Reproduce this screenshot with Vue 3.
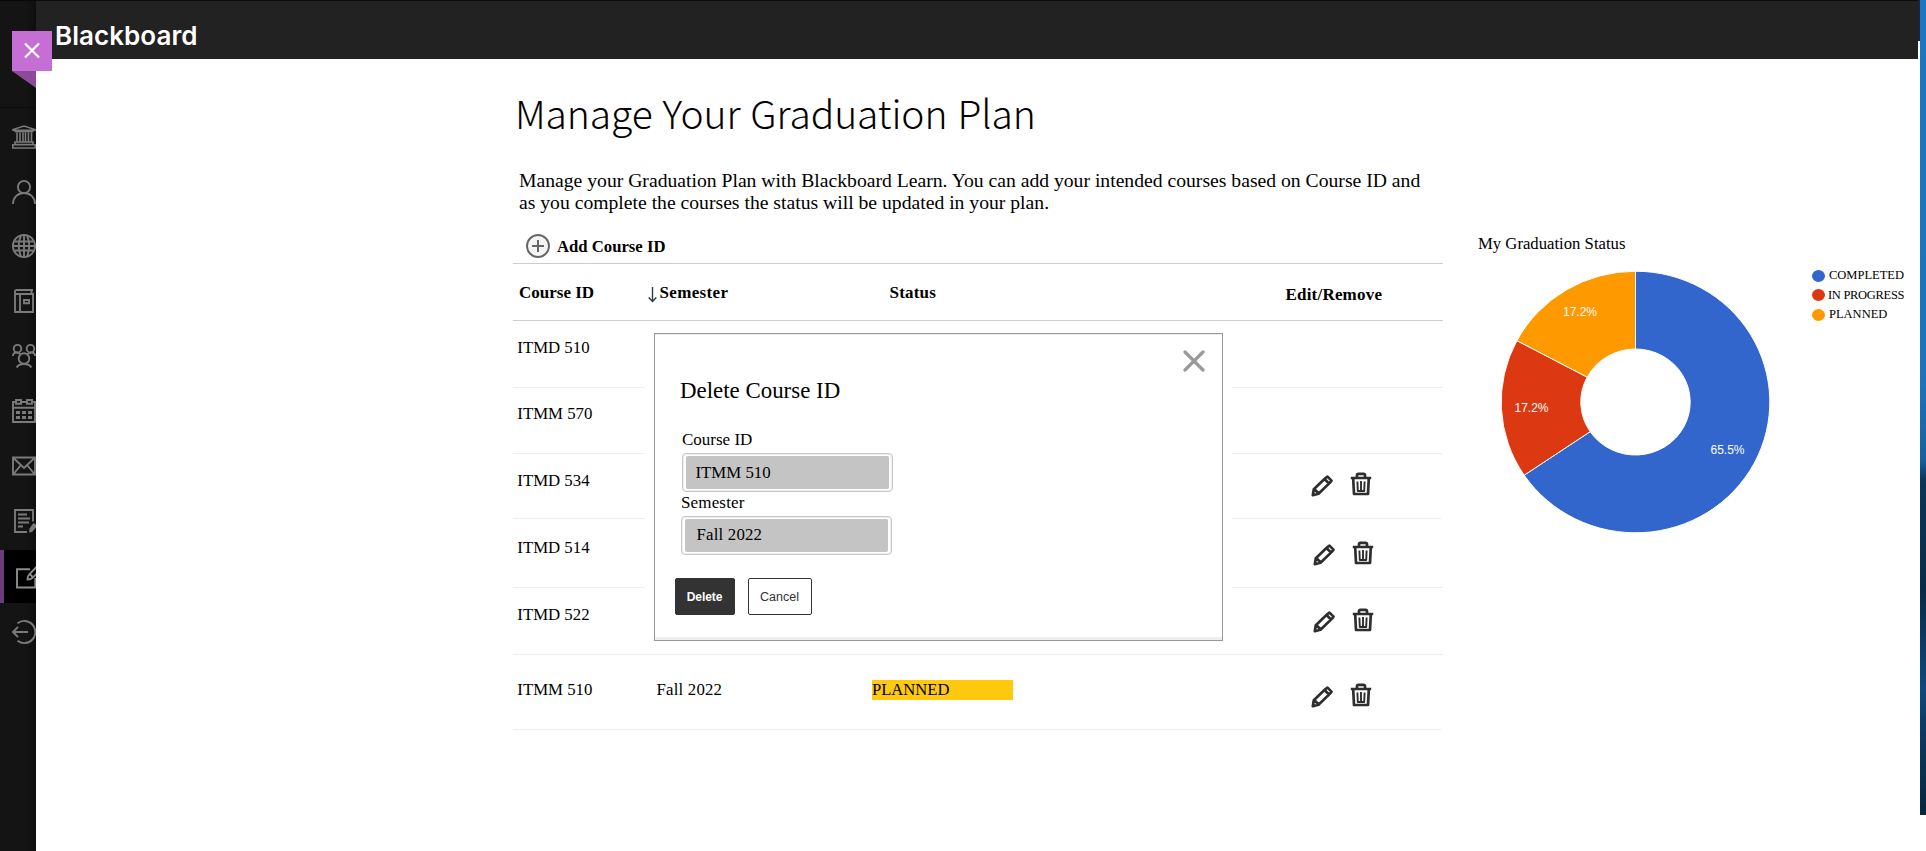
<script setup>
const navItems = [
  { name: 'institution', h: 57 },
  { name: 'profile', h: 54 },
  { name: 'activity', h: 54 },
  { name: 'courses', h: 55 },
  { name: 'organizations', h: 55 },
  { name: 'calendar', h: 55 },
  { name: 'messages', h: 55 },
  { name: 'grades', h: 56 },
  { name: 'tools', h: 53, active: true },
  { name: 'signout', h: 57 },
]

const rows = [
  { id: 'ITMD 510', h: 67, top: 17, w: 930 },
  { id: 'ITMM 570', h: 66, top: 16, w: 929 },
  { id: 'ITMD 534', h: 65, top: 17, w: 928, actions: 18, shift: 0 },
  { id: 'ITMD 514', h: 69, top: 19, w: 930, actions: 22, shift: 2 },
  { id: 'ITMD 522', h: 67, top: 17, w: 930, actions: 20, shift: 2 },
  { id: 'ITMM 510', h: 75, top: 25, w: 928, actions: 28, shift: 0, semester: 'Fall 2022', status: 'PLANNED' },
]

const legend = [
  { label: 'COMPLETED', color: '#3366cc' },
  { label: 'IN PROGRESS', color: '#dc3912', tight: true },
  { label: 'PLANNED', color: '#ff9900' },
]

const CX = 134.5, CY = 131, RX = 134.3, RY = 130.8, HX = 54.7, HY = 53
function slice(from, to) {
  const p = (f, rx, ry) => {
    const a = f * 2 * Math.PI
    return `${(CX + rx * Math.sin(a)).toFixed(2)} ${(CY - ry * Math.cos(a)).toFixed(2)}`
  }
  const large = to - from > 0.5 ? 1 : 0
  return `M${p(from, RX, RY)}A${RX} ${RY} 0 ${large} 1 ${p(to, RX, RY)}L${p(to, HX, HY)}A${HX} ${HY} 0 ${large} 0 ${p(from, HX, HY)}Z`
}
const slices = [
  { d: slice(0, 0.6555), color: '#3366cc', label: '65.5%', x: 226.5, y: 183 },
  { d: slice(0.6555, 0.8277), color: '#dc3912', label: '17.2%', x: 30.5, y: 140.5 },
  { d: slice(0.8277, 1), color: '#ff9900', label: '17.2%', x: 79, y: 45 },
]
</script>

<template>
  <div class="app">
    <aside class="sidebar">
      <div class="side-top"></div>
      <nav>
        <a v-for="n in navItems" :key="n.name" class="nav-item" :class="{ active: n.active }" :style="{ height: n.h + 'px' }">
          <svg class="nav-icon" width="24" height="24" viewBox="0 0 24 24" fill="none" stroke="#7a7a7a" stroke-width="1.9">
            <g v-if="n.name === 'institution'">
              <path d="M1 5.2V4.6L12 1l11 3.6v.6zM2.5 6.5h19M5 7.5v9M8 7.5v9M11 7.5v9M13.5 7.5v9M16.500 7.500v9M19.500 7.500v9M3 17h18v2.500H3zM.8 19.700h22.400v3.300H.8z" stroke-width="1.600" />
            </g>
            <g v-else-if="n.name === 'profile'">
              <circle cx="12" cy="7" r="6.100" />
              <path d="M.9 24C1.200 17 6 13 12 13s10.800 4 11.100 11" />
            </g>
            <g v-else-if="n.name === 'activity'">
              <circle cx="12" cy="12" r="11.100" />
              <path d="M12 1v22M1 12h22M3 7.500h18M3 16.500h18M9 1.500c-3 6-3 15 0 21M15 1.500c3 6 3 15 0 21" />
            </g>
            <g v-else-if="n.name === 'courses'">
              <path d="M21 1H4.500a1.500 1.500 0 0 0-1.500 1.500V23h18V5H3.500M19.500 1.500V4.500M8 5v18M12 11h5v3.300h-5z" />
            </g>
            <g v-else-if="n.name === 'organizations'">
              <circle cx="5.500" cy="4.700" r="3.800" />
              <circle cx="18.500" cy="4.700" r="3.800" />
              <circle cx="12" cy="14.500" r="5.300" />
              <path d="M.9 12c0-2 1.300-3.500 3.600-3.500 2 0 3.500 1 4.500 2.500M23.100 12c0-2-1.300-3.500-3.600-3.500-2 0-3.500 1-4.500 2.500M4.500 23.500c1.500-2.500 4-3.500 7.500-3.500s6 1 7.500 3.500" />
            </g>
            <g v-else-if="n.name === 'calendar'">
              <path d="M3 3H1v20h22V3h-2M1 8.700h22M9 3h6M4 1h5v3.700H4zM15 1h5v3.700h-5z" />
              <path d="M4 13.500h4M10 13.500h4M16 13.500h4M4 18.500h4M10 18.500h4M16 18.500h4" stroke-width="2.800" />
            </g>
            <g v-else-if="n.name === 'messages'">
              <path d="M1 3.500h22v17H1zM1.500 4l10.500 10L22.500 4M1.500 20l7.500-9M22.500 20L15 11" />
            </g>
            <g v-else-if="n.name === 'grades'">
              <path d="M21 12.500V1H3v22h12M6 5.500h9M6 9.500h12M6 13.500h11M6 17.500h5" />
              <path d="M17 23.500l.5-4 4-5.500 2.500 1.500v3l-4 4.500z" fill="#7a7a7a" stroke="none" />
            </g>
            <g v-else-if="n.name === 'tools'" stroke="#8c8c8c">
              <path d="M18 4.300H5v18.200h18.300V13" />
              <path d="M24.500 2l-7 7.200c-1.500 1.500-2 3.300-2 5.300 2 0 3.800-.5 5-1.700l6-6M17.500 9.500c1.500.3 2.700 1.500 3 3" />
            </g>
            <g v-else>
              <path d="M5.500 3.200A11.100 11.100 0 1 1 5.500 20.800M16 12H1.200M6 6.800L1 12l5 5.200" />
            </g>
          </svg>
        </a>
      </nav>
    </aside>

    <div class="main">
      <header class="topbar">
        <span class="logo">Blackboard</span>
      </header>

      <div class="content">
        <section class="plan">
          <h1>Manage Your Graduation Plan</h1>
          <p class="intro">
            <span>Manage your Graduation Plan with Blackboard Learn. You can add your intended courses based on Course ID and</span><br />
            <span>as you complete the courses the status will be updated in your plan.</span>
          </p>
          <div class="add-course">
            <svg width="24" height="24" viewBox="0 0 24 24" fill="none" stroke="#666">
              <circle cx="12" cy="12" r="11" fill="#f5f5f5" stroke-width="1.900" />
              <path d="M12 6v12M6 12h12" stroke-width="2" />
            </svg>
            <span>Add Course ID</span>
          </div>
          <div class="table-head">
            <span class="c1">Course ID</span>
            <svg width="9" height="16" viewBox="0 0 9 16" fill="none" stroke="#2d3b45" stroke-width="1.400">
              <path d="M4.500 0v14M.7 10.500l3.800 4 3.800-4" />
            </svg>
            <span class="c2">Semester</span>
            <span class="c3">Status</span>
            <span class="c4">Edit/Remove</span>
          </div>
          <div v-for="(r, i) in rows" :key="i" class="row" :style="{ height: r.h + 'px', width: r.w + 'px' }">
            <span class="course" :style="{ paddingTop: r.top + 'px' }">{{ r.id }}</span>
            <span class="semester">{{ r.semester }}</span>
            <span class="state"><span v-if="r.status" class="badge">{{ r.status }}</span></span>
            <span v-if="r.actions" class="actions" :style="{ paddingTop: r.actions + 'px', paddingLeft: r.shift + 'px' }">
              <svg class="pencil" width="22" height="22" viewBox="0 0 22 22" fill="none" stroke="#2e2e2e" stroke-width="2.700" stroke-linejoin="round">
                <path d="M1.800 20.200l1-6L14.500 3l2-1.400 4 4-1.500 2L7.500 18.800zM13.500 4l4.500 4.500M3.200 14l4.500 4.500" />
              </svg>
              <svg width="22" height="24" viewBox="0 0 22 24" fill="none" stroke="#2e2e2e" stroke-width="2.700" stroke-linejoin="round">
                <path d="M.8 6h20.400M7 5.500V3.200Q7 1.800 8.500 1.800h5Q15 1.800 15 3.200v2.300M3.200 6.500l.8 15.500h14l.8-15.500" />
                <path d="M7.400 9.500l.4 9.500h6.400l.4-9.500M11 9v10" stroke-width="1.900" />
              </svg>
            </span>
          </div>

          <div class="dialog">
            <svg class="close" width="22" height="22" viewBox="0 0 22 22" stroke="#999" stroke-width="3.200" stroke-linecap="round">
              <path d="M2 2l18 18M20 2L2 20" />
            </svg>
            <h2>Delete Course ID</h2>
            <label>Course ID</label>
            <div class="field"><div class="value">ITMM 510</div></div>
            <label class="second">Semester</label>
            <div class="field second"><div class="value">Fall 2022</div></div>
            <div class="buttons">
              <button class="delete">Delete</button>
              <button class="cancel">Cancel</button>
            </div>
          </div>
        </section>

        <section class="status-panel">
          <h3>My Graduation Status</h3>
          <div class="chart-row">
            <svg class="donut" width="270" height="264" viewBox="0 0 270 264">
              <path v-for="(s, i) in slices" :key="i" :d="s.d" :fill="s.color" stroke="#fff" stroke-width="1" />
              <text v-for="(s, i) in slices" :key="'t' + i" :x="s.x" :y="s.y" text-anchor="middle">{{ s.label }}</text>
            </svg>
            <ul class="legend">
              <li v-for="l in legend" :key="l.label" :class="{ tight: l.tight }">
                <svg width="13" height="12" viewBox="0 0 13 12"><ellipse cx="6.500" cy="6" rx="6.500" ry="6" :fill="l.color" /></svg>
                <span>{{ l.label }}</span>
              </li>
            </ul>
          </div>
        </section>
      </div>
    </div>

    <div class="edge"><div class="edge-cap"></div><div class="edge-blue"></div></div>

    <div class="close-tab">
      <svg width="40" height="58" viewBox="0 0 40 58">
        <path d="M0 40h24v17z" fill="#8c4b9a" />
        <path d="M0 0h40v40H0z" fill="#c56fd5" />
        <path d="M13 12.500l14 14M27 12.500l-14 14" stroke="#fff" stroke-width="2.200" />
      </svg>
    </div>
  </div>
</template>

<style>
html, body { margin: 0; background: #fff; overflow: hidden; }
</style>

<style scoped>
.app { position: relative; display: flex; width: 1926px; height: 851px; overflow: hidden; background: #fff; font-family: "Liberation Serif", "Times New Roman", serif; color: #000; }
.sidebar { width: 36px; height: 851px; overflow: hidden; background: linear-gradient(90deg, #141414 26px, #0e0e0e 36px); flex: none; border-top: 1px solid #080808; box-sizing: border-box; }
.side-top { height: 107px; border-bottom: 1px solid #0a0a0a; box-sizing: border-box; }
.nav-item { display: flex; align-items: center; box-sizing: border-box; padding-left: 12px; }
.nav-item.active { background: #000; border-left: 4px solid #6b3b7a; padding-left: 8px; margin-top: 1px; }
.nav-icon { flex: none; overflow: visible; }
.main { width: 1882px; flex: none; }
.topbar { height: 59px; background: #222; border-top: 1px solid #0c0c0c; box-sizing: border-box; padding: 17px 0 0 19px; }
.logo { display: block; font: 600 26px/36px Inter, sans-serif; letter-spacing: 0.050px; color: #fff; white-space: nowrap; }
.content { display: flex; padding-left: 477px; }
.plan { position: relative; width: 930px; height: 792px; flex: none; }
h1 { margin: 28px 0 0 2px; height: 50px; font: 300 39px/50px "Noto Sans CJK JP", sans-serif; letter-spacing: -0.100px; word-spacing: 1.500px; white-space: nowrap; }
.intro { margin: 32px 0 0 6px; font-size: 19.670px; line-height: 22.400px; height: 46px; white-space: nowrap; }
.add-course { display: flex; align-items: center; gap: 7px; height: 48px; margin-left: 13px; box-sizing: border-box; padding-top: 14px; font-size: 16.700px; font-weight: bold; }
.add-course span { padding-top: 2px; }
.table-head { display: flex; align-items: flex-start; height: 58px; box-sizing: border-box; border-top: 1px solid #ccc; border-bottom: 1px solid #ccc; font-size: 17px; line-height: 20px; font-weight: bold; padding: 19px 0 0 6px; }
.table-head svg { margin-top: 4px; }
.c1 { width: 128.500px; }
.c2 { width: 230px; margin-left: 3px; letter-spacing: 0.350px; }
.c3 { width: 396px; letter-spacing: 0.200px; }
.c4 { padding-top: 2px; letter-spacing: 0.200px; }
.row { display: grid; grid-template-columns: 143px 216px 439px 1fr; box-sizing: border-box; border-bottom: 1px solid #eee; font-size: 16.800px; line-height: 20px; }
.course { padding-left: 4.300px; white-space: nowrap; }
.semester { padding-top: 25px; padding-left: 0.500px; letter-spacing: 0.200px; }
.state { padding-top: 25px; }
.badge { display: block; width: 141px; height: 20px; background: #ffc90e; font-size: 16.600px; line-height: 19px; }
.actions { display: flex; align-items: flex-start; gap: 17px; }
.pencil { margin-top: 3px; }
.dialog { position: absolute; left: 141px; top: 274px; width: 569px; height: 308px; box-sizing: border-box; border: 1px solid #999; background: #fff; box-shadow: 0 0 0 9px #fff, inset 0 1px #eee, inset 0 -3px #efefef; padding: 45px 0 0 26px; }
.close { position: absolute; right: 17px; top: 16px; }
h2 { margin: 0 0 0 -1px; font-weight: normal; font-size: 22.900px; line-height: 24px; }
label { display: block; margin: 27px 0 0 1px; font-size: 17px; line-height: 20px; height: 20px; }
label.second { margin: 1px 0 0 0; letter-spacing: 0.150px; }
.field { width: 211.500px; height: 39px; margin: 3px 0 0 0.500px; box-sizing: border-box; border: 1px solid #c8c8c8; box-shadow: inset 0 0 0 1px #eee; border-radius: 4px; padding: 2px 3px 3px 3px; }
.field.second { margin: 3px 0 0 -0.500px; }
.value { height: 33px; border-radius: 2px; background: #c4c4c4; font-size: 16.800px; line-height: 33px; padding-left: 10px; }
.field.second .value { padding-left: 12px; line-height: 32px; letter-spacing: 0.200px; }
.buttons { display: flex; gap: 13px; margin: 23px 0 0 -6px; }
button { height: 37px; border-radius: 2px; border: 1px solid #333; box-sizing: border-box; padding: 0 1px 0 0; font: 12.500px "Liberation Sans", Arial, sans-serif; }
.delete { width: 60px; background: #333; color: #fff; font-weight: bold; font-size: 12px; letter-spacing: -0.100px; }
.cancel { width: 64px; background: #fff; color: #333; }
.status-panel { padding: 175px 0 0 35px; }
h3 { margin: 0; font-weight: normal; font-size: 16.700px; line-height: 20px; }
.chart-row { display: flex; padding: 18px 0 0 22.500px; }
.donut { margin-top: -1px; }
.donut text { fill: #fff; font: 12px "Liberation Sans", Arial, sans-serif; }
.legend { list-style: none; margin: -6px 0 0 41.500px; padding: 0; }
.legend li { display: flex; align-items: center; gap: 4px; height: 19.500px; font-size: 12.500px; white-space: nowrap; }
.legend li.tight { gap: 3px; letter-spacing: -0.300px; }
.edge { width: 8px; flex: none; }
.edge-cap { height: 41px; width: 2px; background: #222230; }
.edge-blue { width: 6px; height: 815px; margin: -41px 0 0 2px; background: linear-gradient(#1b77c2 0, #1b74bd 380px, #17619e 460px, #08365c 480px, #062c4a 590px, #0d4a80 690px, #0a3c69 720px, #05273f 815px); }
.close-tab { position: absolute; left: 12px; top: 31px; }
</style>
